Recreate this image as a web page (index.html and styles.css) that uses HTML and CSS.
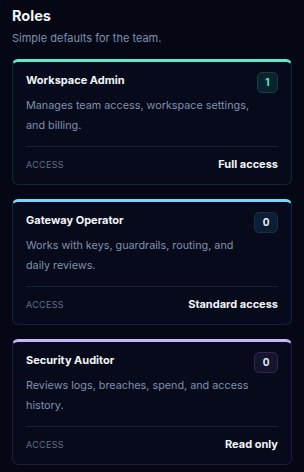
FILE: index.html
```html
<!DOCTYPE html>
<html lang="en">
<head>
    <meta charset="UTF-8">
    <meta name="viewport" content="width=device-width, initial-scale=1.0">
    <title>Roles</title>
    <link rel="stylesheet" href="styles.css">
</head>
<body>

    <h1 class="title">Roles</h1>
    <p class="subtitle">Simple defaults for the team.</p>

    <div class="roles">
        <div class="card admin">
            <div class="card-head">
                <div class="card-name">Workspace Admin</div>
                <div class="badge">1</div>
            </div>
            <p class="card-desc">Manages team access, workspace settings, and billing.</p>
            <div class="card-foot">
                <span class="foot-label">Access</span>
                <span class="foot-value">Full access</span>
            </div>
        </div>

        <div class="card operator">
            <div class="card-head">
                <div class="card-name">Gateway Operator</div>
                <div class="badge">0</div>
            </div>
            <p class="card-desc">Works with keys, guardrails, routing, and daily reviews.</p>
            <div class="card-foot">
                <span class="foot-label">Access</span>
                <span class="foot-value">Standard access</span>
            </div>
        </div>

        <div class="card auditor">
            <div class="card-head">
                <div class="card-name">Security Auditor</div>
                <div class="badge">0</div>
            </div>
            <p class="card-desc">Reviews logs, breaches, spend, and access history.</p>
            <div class="card-foot">
                <span class="foot-label">Access</span>
                <span class="foot-value">Read only</span>
            </div>
        </div>
    </div>

</body>
</html>
```

FILE: styles.css
```css
body {
    margin: 0;
    padding: 6px 12px;
    background: #050714;
    font-family: Inter, "Noto Sans", sans-serif;
    color: #f1f5f9;
}
.title {
    margin: 0;
    font-size: 14.5px;
    font-weight: 700;
    line-height: 19px;
}
.subtitle {
    margin: 5px 0 0;
    font-size: 11px;
    line-height: 16px;
    color: #7f91b0;
}
.roles {
    display: flex;
    flex-direction: column;
    gap: 14px;
    margin-top: 13px;
}
.card {
    background: #070a1a;
    border: 1px solid #14243a;
    border-top: 3px solid #5eead4;
    border-radius: 6px;
    padding: 10px 13px 11px;
}
.card.admin {
    border-color: #0d2a30;
    border-top-color: #5eead4;
}
.card.operator {
    border-color: #112338;
    border-top-color: #7dd3fc;
}
.card.auditor {
    border-color: #1c1a38;
    border-top-color: #c4b5fd;
}
.card-head {
    display: flex;
    justify-content: space-between;
    align-items: flex-start;
}
.card-name {
    font-size: 11px;
    font-weight: 700;
    line-height: 16px;
}
.badge {
    width: 19px;
    height: 19px;
    border: 1px solid #134047;
    border-radius: 5px;
    background: #0a2229;
    color: #5eead4;
    font-size: 10px;
    font-weight: 700;
    line-height: 19px;
    text-align: center;
}
.operator .badge {
    width: 22px;
    border-color: #163049;
    background: #0b1e33;
    color: #e0f2fe;
}
.auditor .badge {
    width: 22px;
    border-color: #2c2850;
    background: #15132d;
    color: #e0e7ff;
}
.card-desc {
    margin: 3px 0 0;
    max-width: 226px;
    font-size: 10.8px;
    line-height: 20px;
    color: #7f91b0;
}
.card-foot {
    display: flex;
    justify-content: space-between;
    align-items: center;
    margin-top: 10px;
    padding-top: 8px;
    border-top: 1px solid #15233a;
    height: 18px;
}
.foot-label {
    font-size: 9px;
    text-transform: uppercase;
    letter-spacing: 0.3px;
    color: #5f6f8c;
}
.foot-value {
    font-size: 11px;
    font-weight: 700;
}
```
